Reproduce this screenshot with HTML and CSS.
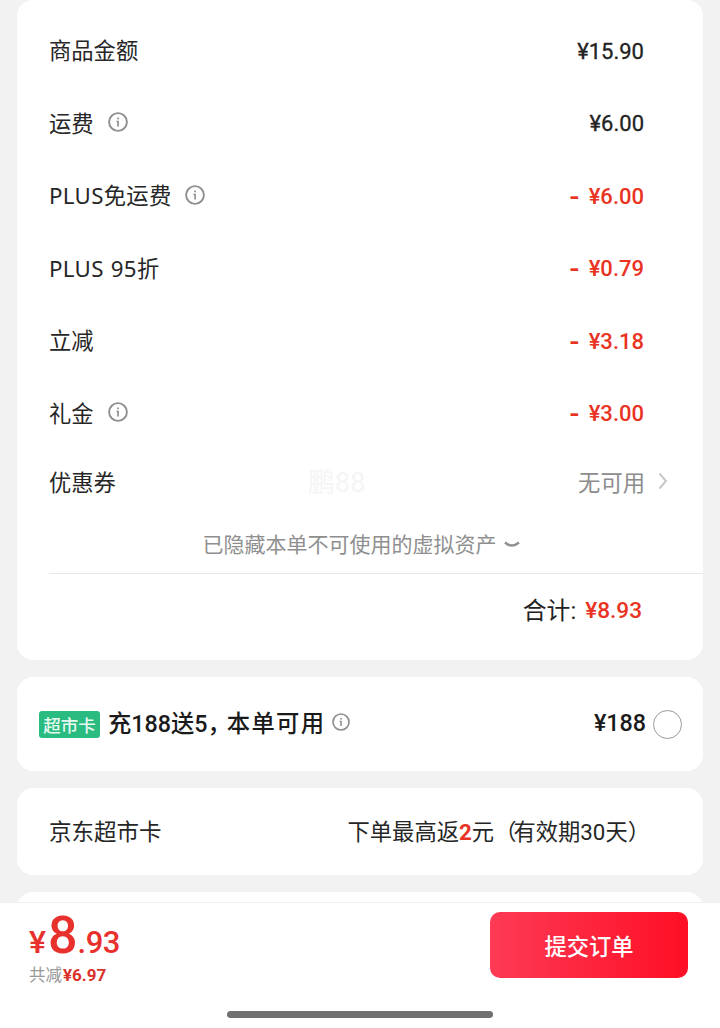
FILE: index.html
```html
<!DOCTYPE html>
<html lang="zh-CN">
<head>
    <meta charset="UTF-8">
    <meta name="viewport" content="width=device-width, initial-scale=1.0">
    <title>提交订单</title>
    <link rel="stylesheet" href="styles.css">
</head>
<body>
    <svg class="icon-defs" width="0" height="0">
        <symbol id="info" viewBox="0 0 20 20">
            <circle cx="10" cy="10" r="8.9" fill="none" stroke="#8f8f8f" stroke-width="1.9"/>
            <path d="M8.4 8.7 H10.9 V14.4 H9.2 V9.9 H8.4 Z" fill="#8f8f8f"/>
            <rect x="9.2" y="5.5" width="1.7" height="1.8" fill="#8f8f8f"/>
        </symbol>
    </svg>

    <div class="scroll">
        <!-- Price breakdown -->
        <section class="card summary">
            <div class="row">
                <span class="label">商品金额</span>
                <span class="amount">¥15.90</span>
            </div>
            <div class="row">
                <span class="label">运费<svg class="info"><use href="#info"/></svg></span>
                <span class="amount">¥6.00</span>
            </div>
            <div class="row">
                <span class="label plus">PLUS免运费<svg class="info"><use href="#info"/></svg></span>
                <span class="amount red"><span class="minus">-</span> ¥6.00</span>
            </div>
            <div class="row">
                <span class="label plus">PLUS 95折</span>
                <span class="amount red"><span class="minus">-</span> ¥0.79</span>
            </div>
            <div class="row">
                <span class="label">立减</span>
                <span class="amount red"><span class="minus">-</span> ¥3.18</span>
            </div>
            <div class="row">
                <span class="label">礼金<svg class="info"><use href="#info"/></svg></span>
                <span class="amount red"><span class="minus">-</span> ¥3.00</span>
            </div>
            <div class="row coupon">
                <span class="label">优惠券</span>
                <span class="watermark">鹏88</span>
                <span class="coupon-value">无可用
                    <svg class="arrow" viewBox="0 0 10 18"><path d="M1.5 1.5 L8 9 L1.5 16.5" fill="none" stroke="#c8c8c8" stroke-width="2"/></svg>
                </span>
            </div>
            <div class="hidden-note">已隐藏本单不可使用的虚拟资产
                <svg class="chevron" viewBox="0 0 16 8"><path d="M1 1.5 Q8 7.5 15 1.5" fill="none" stroke="#8f8f8f" stroke-width="2.4"/></svg>
            </div>
            <div class="total">
                <span class="total-label">合计:</span>
                <span class="total-value">¥8.93</span>
            </div>
        </section>

        <!-- Supermarket card offer -->
        <section class="card offer">
            <span class="tag">超市卡</span>
            <span class="offer-title">充188送5<span class="comma">，</span><span class="wide">本单可用</span></span>
            <svg class="info small"><use href="#info"/></svg>
            <span class="offer-price">¥188</span>
            <span class="radio"></span>
        </section>

        <section class="card rebate">
            <span class="label">京东超市卡</span>
            <span class="rebate-text">下单最高返<b>2</b>元<span class="paren">（</span>有效期30天）</span>
        </section>

        <section class="card next"></section>
    </div>

    <!-- Bottom bar -->
    <footer class="footer">
        <div class="footer-main">
            <div class="pay">
                <div class="pay-price"><span class="yen">¥</span><span class="big">8</span><span class="cents">.93</span></div>
                <div class="pay-save">共减<b>¥6.97</b></div>
            </div>
            <button class="submit">提交订单</button>
        </div>
        <div class="home-bar"></div>
    </footer>
</body>
</html>
```

FILE: styles.css
```css
* {
    box-sizing: border-box;
}
body {
    margin: 0;
    height: 1028px;
    overflow: hidden;
    display: flex;
    flex-direction: column;
    background-color: #f2f2f2;
    color: #222;
    font-family: Roboto, "Noto Sans CJK SC", sans-serif;
}
.icon-defs {
    position: absolute;
}
.scroll {
    height: 902px;
    overflow: hidden;
    padding: 0 17px;
}
.card {
    background-color: #fff;
    border-radius: 16px;
    margin-bottom: 17px;
}

/* summary */
.summary {
    height: 660px;
    padding: 15px 0 0 32px;
}
.row {
    display: flex;
    justify-content: space-between;
    align-items: center;
    height: 72.5px;
    padding-right: 59px;
}
.label {
    display: flex;
    align-items: center;
    padding-bottom: 3px;
    font-family: "Noto Sans", "Noto Sans CJK SC", sans-serif;
    font-size: 22.3px;
    color: #262626;
}
.plus {
    letter-spacing: 0.3px;
    word-spacing: 1px;
}
.info {
    width: 20px;
    height: 20px;
    margin-left: 14px;
}
.amount {
    font-size: 22px;
    color: #222;
    -webkit-text-stroke: 0.3px #222;
}
.red {
    color: #e93323;
    font-weight: 500;
    word-spacing: 5px;
    -webkit-text-stroke: 0;
}
.minus {
    display: inline-block;
    font-weight: 700;
    transform: scale(1.25, 1.1);
}
.coupon {
    position: relative;
    height: 66px;
    padding-right: 35px;
}
.watermark {
    position: absolute;
    left: 259px;
    top: 18px;
    font-size: 27px;
    line-height: 30px;
    color: #f5f5f5;
}
.coupon-value {
    display: flex;
    align-items: center;
    padding-bottom: 4px;
    font-size: 22.3px;
    color: #8c8c8c;
}
.arrow {
    width: 10px;
    height: 18px;
    margin-left: 13px;
}
.hidden-note {
    display: flex;
    align-items: center;
    justify-content: center;
    height: 58px;
    padding: 0 30px 3px 0;
    font-size: 21px;
    color: #8f8f8f;
    border-bottom: 1px solid #e8e8e8;
}
.chevron {
    width: 16px;
    height: 8px;
    margin: 3px 0 0 7px;
}
.total {
    display: flex;
    justify-content: flex-end;
    align-items: center;
    height: 72px;
    padding-right: 61px;
}
.total-label {
    margin-right: 9px;
    padding-bottom: 3px;
    font-size: 23.8px;
}
.total-value {
    font-size: 22.6px;
    font-weight: 500;
    color: #e93323;
}

/* offer */
.offer {
    display: flex;
    align-items: center;
    height: 94px;
    padding: 0 21px 0 22px;
}
.tag {
    display: flex;
    align-items: center;
    justify-content: center;
    width: 61px;
    height: 27px;
    border-radius: 3px;
    background-color: #2abb80;
    color: #e6f8f0;
    font-size: 17.5px;
    font-weight: 500;
}
.offer-title {
    margin-left: 8px;
    padding-bottom: 5px;
    font-size: 23.3px;
    font-weight: 500;
    color: #1a1a1a;
}
.comma {
    letter-spacing: -4px;
}
.wide {
    letter-spacing: 1.3px;
}
.info.small {
    width: 18px;
    height: 18px;
    margin: 0 0 4px 7px;
}
.offer-price {
    margin-left: auto;
    padding-bottom: 3px;
    font-size: 23.3px;
    font-weight: 500;
    color: #1a1a1a;
}
.radio {
    width: 29px;
    height: 29px;
    margin-left: 7px;
    border: 1px solid #999;
    border-radius: 50%;
}

/* rebate */
.rebate {
    display: flex;
    align-items: center;
    height: 87px;
    padding-left: 32px;
}
.rebate .label {
    font-size: 22.5px;
}
.rebate-text {
    margin-left: 186px;
    padding-bottom: 3px;
    font-size: 22.3px;
    color: #262626;
}
.rebate-text b {
    font-weight: 700;
    color: #e93323;
}
.paren {
    letter-spacing: -3px;
}
.next {
    height: 40px;
}

/* footer */
.footer {
    flex: 1;
    display: flex;
    flex-direction: column;
    background-color: #fff;
    border-top: 1px solid #f0f0f0;
}
.footer-main {
    display: flex;
    justify-content: space-between;
    height: 75px;
    padding: 9px 32px 0 29px;
}
.pay-price {
    display: flex;
    align-items: baseline;
    height: 50px;
    line-height: 47px;
    color: #e8302c;
    font-weight: 500;
}
.yen {
    font-size: 32px;
}
.big {
    margin-left: 2px;
    font-size: 52px;
}
.cents {
    font-size: 31px;
    letter-spacing: -0.5px;
}
.pay-save {
    font-size: 16.5px;
    color: #999;
}
.pay-save b {
    margin-left: 1px;
    font-size: 17px;
    font-weight: 700;
    color: #d9322b;
}
.submit {
    width: 198px;
    height: 66px;
    border: 0;
    border-radius: 10px;
    background: linear-gradient(90deg, #fd3a55, #fe0f25);
    color: #fff;
    font-family: inherit;
    font-size: 22.3px;
    font-weight: 500;
}
.home-bar {
    width: 266px;
    height: 7px;
    margin: 33px auto 0;
    border-radius: 4px;
    background-color: #707070;
}
```
